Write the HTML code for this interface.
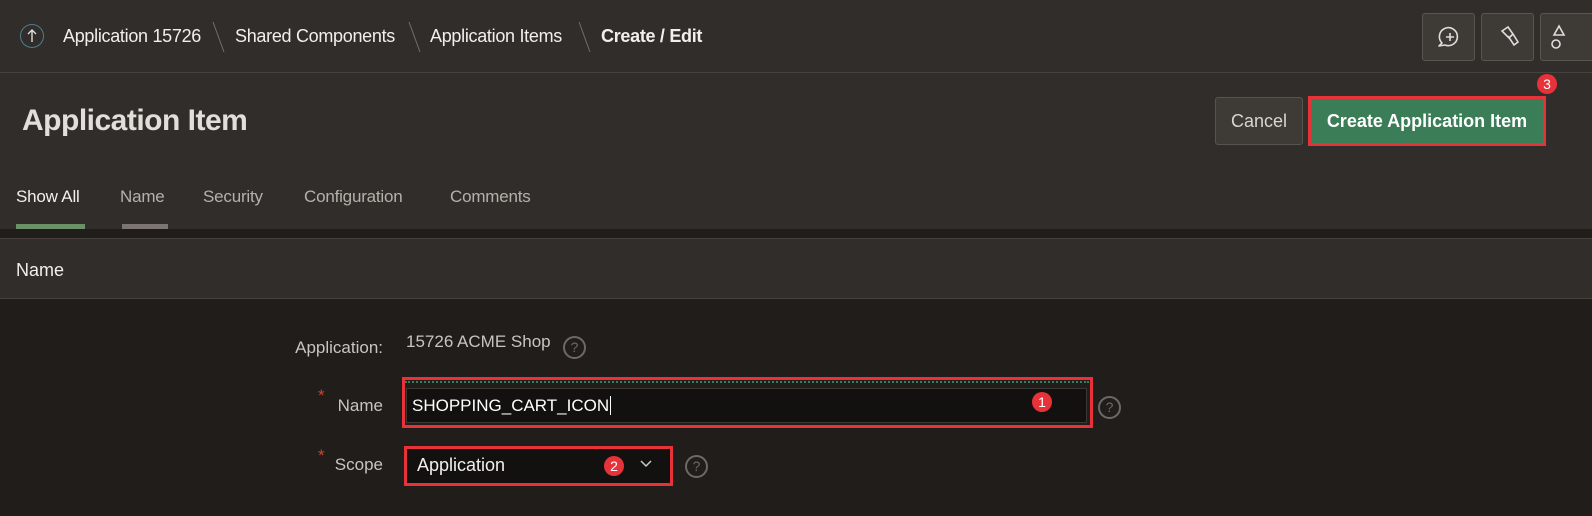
<!DOCTYPE html>
<html><head><style>
*{margin:0;padding:0;box-sizing:border-box}
body{width:1592px;height:516px;background:#201d1b;font-family:"Liberation Sans",sans-serif;color:#e8e4df;position:relative;overflow:hidden}
.a{position:absolute}
.top{left:0;top:0;width:1592px;height:229px;background:#312d2a}
.bc{font-size:18px;top:26px;color:#f2efeb;letter-spacing:-0.3px}
.sep{top:22px;width:1px;height:30px;background:#77716b;transform:skewX(20deg)}
.tb{width:53px;height:48px;top:13px;border:1px solid #5a554f;background:#3e3a35;border-radius:3px}
.tab{top:187px;font-size:17px;color:#b6b0a9;letter-spacing:-0.2px}
.help{width:23px;height:23px;border:2px solid #6e6963;border-radius:50%;color:#6e6963;font-size:14px;text-align:center;line-height:19px}
.badge{width:20px;height:20px;border-radius:50%;background:#e8323a;color:#fff;font-size:14px;text-align:center;line-height:20px}
.lbl{font-size:17px;color:#c9c4be;text-align:right}
.star{color:#c74634;font-size:17px}
</style></head><body>
<div class="a top"></div>
<div class="a" style="left:0;top:72px;width:1592px;height:1px;background:#46413c"></div>
<div class="a" style="left:20px;top:24px;width:24px;height:24px;border:1.5px solid #4f7d8a;border-radius:50%"></div>
<svg class="a" style="left:20px;top:24px" width="24" height="24"><path d="M12 6v12M8 10l4-4 4 4" stroke="#ddd" stroke-width="1.4" fill="none"/></svg>
<div class="a bc" style="left:63px">Application 15726</div>
<div class="a sep" style="left:218px"></div>
<div class="a bc" style="left:235px">Shared Components</div>
<div class="a sep" style="left:414px"></div>
<div class="a bc" style="left:430px">Application Items</div>
<div class="a sep" style="left:584px"></div>
<div class="a bc" style="left:601px;font-weight:bold">Create / Edit</div>
<div class="a tb" style="left:1422px"><svg width="53" height="48"><path d="M19 29 A9 9 0 1 1 22 31 L16 32 Z" stroke="#ddd" stroke-width="1.6" fill="none" stroke-linejoin="round"/><path d="M23 23h8M27 19v8" stroke="#ddd" stroke-width="1.6"/></svg></div>
<div class="a tb" style="left:1481px"><svg width="53" height="48"><path d="M20 17l6-4 5 7-4 4zM26 22l6 9 4-3-5-8" stroke="#ddd" stroke-width="1.6" fill="none"/></svg></div>
<div class="a tb" style="left:1540px;width:60px"><svg width="53" height="48"><path d="M18 12l5 9h-10z" stroke="#ddd" stroke-width="1.6" fill="none"/><circle cx="15" cy="30" r="4" stroke="#ddd" stroke-width="1.6" fill="none"/></svg></div>
<div class="a" style="left:22px;top:104px;font-size:30px;font-weight:bold;color:#e2ded9;letter-spacing:-0.5px">Application Item</div>
<div class="a" style="left:1215px;top:97px;width:88px;height:48px;background:#3e3a35;border:1px solid #58534d;border-radius:3px;font-size:18px;color:#d9d4cf;text-align:center;line-height:46px">Cancel</div>
<div class="a" style="left:1308px;top:96px;width:238px;height:50px;border:3px solid #e8323a;background:#3a7d56;font-size:18px;font-weight:bold;color:#fff;text-align:center;line-height:44px">Create Application Item</div>
<div class="a badge" style="left:1537px;top:74px">3</div>
<div class="a tab" style="left:16px;color:#f2efeb">Show All</div>
<div class="a tab" style="left:120px">Name</div>
<div class="a tab" style="left:203px">Security</div>
<div class="a tab" style="left:304px">Configuration</div>
<div class="a tab" style="left:450px">Comments</div>
<div class="a" style="left:16px;top:224px;width:69px;height:5px;background:#6a9168"></div>
<div class="a" style="left:122px;top:224px;width:46px;height:5px;background:#7c7571"></div>
<div class="a" style="left:0;top:238px;width:1592px;height:61px;background:#312d2a;border-top:1px solid #46413c;border-bottom:1px solid #46413c"></div>
<div class="a" style="left:16px;top:260px;font-size:18px;color:#f2efeb">Name</div>
<div class="a lbl" style="left:200px;width:183px;top:338px">Application:</div>
<div class="a" style="left:406px;top:332px;font-size:17px;color:#c9c4be">15726 ACME Shop</div>
<div class="a help" style="left:563px;top:336px">?</div>
<div class="a lbl" style="left:200px;width:183px;top:396px">Name</div>
<div class="a star" style="left:318px;top:386px">*</div>
<div class="a" style="left:402px;top:377px;width:691px;height:51px;border:3px solid #e8323a"></div>
<div class="a" style="left:405px;top:381px;width:684px;height:2px;border-top:2px dotted #3a7d56"></div>
<div class="a" style="left:406px;top:388px;width:681px;height:35px;background:#131110;border:1px solid #3c3834"></div>
<div class="a" style="left:412px;top:396px;font-size:17px;color:#fff">SHOPPING_CART_ICON<span style="border-left:1px solid #fff;margin-left:1px"></span></div>
<div class="a badge" style="left:1032px;top:392px">1</div>
<div class="a help" style="left:1098px;top:396px">?</div>
<div class="a lbl" style="left:200px;width:183px;top:455px">Scope</div>
<div class="a star" style="left:318px;top:446px">*</div>
<div class="a" style="left:404px;top:446px;width:269px;height:40px;border:3px solid #e8323a;background:#131110"></div>
<div class="a" style="left:417px;top:455px;font-size:18px;color:#f2efeb">Application</div>
<div class="a badge" style="left:604px;top:456px">2</div>
<svg class="a" style="left:638px;top:458px" width="16" height="12"><path d="M3 3l5 5 5-5" stroke="#ccc" stroke-width="1.5" fill="none"/></svg>
<div class="a help" style="left:685px;top:455px">?</div>
</body></html>
